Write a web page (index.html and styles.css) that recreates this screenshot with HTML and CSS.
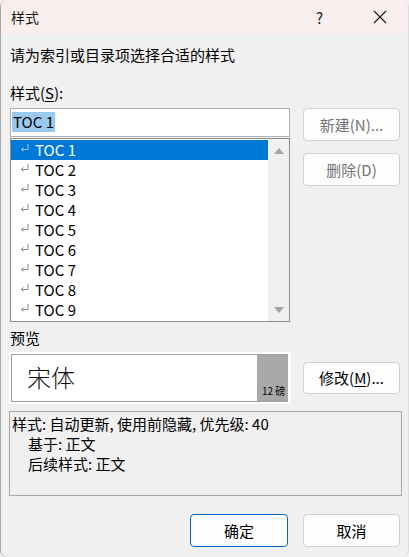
FILE: index.html
```html
<!DOCTYPE html>
<html lang="zh-CN">
<head>
<meta charset="utf-8">
<title>样式</title>
<link rel="stylesheet" href="styles.css">
</head>
<body>
<div class="dialog">
  <div class="titlebar">
    <span class="title">样式</span>
    <span class="help">?</span>
    <svg class="close" width="14" height="14" viewBox="0 0 14 14"><path d="M1 1L13 13M13 1L1 13" stroke="#1a1a1a" stroke-width="1.1" fill="none"/></svg>
  </div>
  <div class="content">
    <div class="intro">请为索引或目录项选择合适的样式</div>
    <div class="label">样式(<u>S</u>):</div>
    <div class="main">
      <div class="left">
        <div class="input"><span class="sel">TOC 1</span></div>
        <div class="list">
          <div class="items">
            <div class="item active"><svg class="ret" width="9" height="8" viewBox="0 0 9 8"><path d="M8 0V5.5H1.5M3.5 3.5L1.5 5.5L3.5 7.5" stroke="currentColor" fill="none" stroke-width="1"/></svg>TOC 1</div>
            <div class="item"><svg class="ret" width="9" height="8" viewBox="0 0 9 8"><path d="M8 0V5.5H1.5M3.5 3.5L1.5 5.5L3.5 7.5" stroke="currentColor" fill="none" stroke-width="1"/></svg>TOC 2</div>
            <div class="item"><svg class="ret" width="9" height="8" viewBox="0 0 9 8"><path d="M8 0V5.5H1.5M3.5 3.5L1.5 5.5L3.5 7.5" stroke="currentColor" fill="none" stroke-width="1"/></svg>TOC 3</div>
            <div class="item"><svg class="ret" width="9" height="8" viewBox="0 0 9 8"><path d="M8 0V5.5H1.5M3.5 3.5L1.5 5.5L3.5 7.5" stroke="currentColor" fill="none" stroke-width="1"/></svg>TOC 4</div>
            <div class="item"><svg class="ret" width="9" height="8" viewBox="0 0 9 8"><path d="M8 0V5.5H1.5M3.5 3.5L1.5 5.5L3.5 7.5" stroke="currentColor" fill="none" stroke-width="1"/></svg>TOC 5</div>
            <div class="item"><svg class="ret" width="9" height="8" viewBox="0 0 9 8"><path d="M8 0V5.5H1.5M3.5 3.5L1.5 5.5L3.5 7.5" stroke="currentColor" fill="none" stroke-width="1"/></svg>TOC 6</div>
            <div class="item"><svg class="ret" width="9" height="8" viewBox="0 0 9 8"><path d="M8 0V5.5H1.5M3.5 3.5L1.5 5.5L3.5 7.5" stroke="currentColor" fill="none" stroke-width="1"/></svg>TOC 7</div>
            <div class="item"><svg class="ret" width="9" height="8" viewBox="0 0 9 8"><path d="M8 0V5.5H1.5M3.5 3.5L1.5 5.5L3.5 7.5" stroke="currentColor" fill="none" stroke-width="1"/></svg>TOC 8</div>
            <div class="item"><svg class="ret" width="9" height="8" viewBox="0 0 9 8"><path d="M8 0V5.5H1.5M3.5 3.5L1.5 5.5L3.5 7.5" stroke="currentColor" fill="none" stroke-width="1"/></svg>TOC 9</div>
          </div>
          <div class="scrollbar">
            <svg width="10" height="6" viewBox="0 0 10 6"><path d="M5 0L10 6H0Z" fill="#a3a3a3"/></svg>
            <svg width="10" height="6" viewBox="0 0 10 6"><path d="M0 0H10L5 6Z" fill="#a3a3a3"/></svg>
          </div>
        </div>
      </div>
      <div class="right">
        <div class="btn disabled">新建(N)...</div>
        <div class="btn disabled second">删除(D)</div>
      </div>
    </div>
    <div class="label preview-label">预览</div>
    <div class="preview-row">
      <div class="preview">
        <div class="preview-inner">
          <div class="sample">宋体</div>
          <div class="size"><span>12 磅</span></div>
        </div>
      </div>
      <div class="btn">修改(<u>M</u>)...</div>
    </div>
    <div class="desc">
      <div>样式: 自动更新, 使用前隐藏, 优先级: 40</div>
      <div class="indent">基于: 正文</div>
      <div class="indent">后续样式: 正文</div>
    </div>
    <div class="footer">
      <div class="btn primary">确定</div>
      <div class="btn">取消</div>
    </div>
  </div>
</div>
</body>
</html>
```
FILE: styles.css
```css
* { box-sizing: border-box; }
html, body {
  margin: 0;
  padding: 0;
}
body {
  width: 409px;
  height: 557px;
  overflow: hidden;
  background: #f0f0f0;
  font-family: "Noto Sans CJK SC", "Noto Sans", sans-serif;
  font-size: 15px;
  color: #000;
}
.dialog {
  width: 409px;
  height: 557px;
  border-left: 1px solid #a9a9a9;
  border-right: 1px solid #dcdcdc;
  border-radius: 7px 7px 7px 7px;
  overflow: hidden;
  background: #f0f0f0;
}
.titlebar {
  height: 34px;
  background: #f9efef;
  display: flex;
  align-items: center;
  padding-left: 10px;
}
.title {
  font-size: 14px;
  line-height: 20px;
  flex: 1;
  color: #1a1a1a;
}
.help {
  font-size: 15px;
  width: 14px;
  margin-right: 43px;
  color: #1a1a1a;
}
.close {
  margin-right: 21px;
}
.content {
  padding: 0 8px 0 9px;
}
.intro {
  margin-top: 11px;
  line-height: 20px;
}
.label {
  margin-top: 18px;
  line-height: 20px;
}
.label u, .btn u {
  text-underline-offset: 2px;
}
.main {
  display: flex;
  margin-top: 5px;
  gap: 13px;
}
.left {
  width: 280px;
}
.input {
  height: 29px;
  background: #fff;
  border: 1px solid #b0b0b0;
  padding: 2px 1px;
}
.sel {
  display: inline-block;
  background: #99c9ef;
  line-height: 20px;
  padding: 0 1px 0 1px;
}
.list {
  margin-top: 1px;
  height: 184px;
  border: 1px solid #8e8e8e;
  background: #fff;
  display: flex;
}
.items {
  flex: 1;
  padding-top: 1px;
}
.item {
  height: 20px;
  line-height: 20px;
  display: flex;
  align-items: center;
  padding-left: 9px;
  color: #000;
}
.item .ret {
  color: #8a8a8a;
  margin-right: 6px;
  margin-top: -4px;
}
.item.active {
  background: #0078d7;
  color: #fff;
}
.item.active .ret {
  color: #9fc6ee;
}
.scrollbar {
  width: 21px;
  background: #f0f0f0;
  display: flex;
  flex-direction: column;
  justify-content: space-between;
  align-items: center;
  padding: 9px 0 8px 0;
}
.right {
  width: 97px;
  display: flex;
  flex-direction: column;
}
.btn {
  width: 97px;
  height: 33px;
  border: 1px solid #d0d0d0;
  border-radius: 4px;
  background: #fdfdfd;
  display: flex;
  align-items: center;
  justify-content: center;
  line-height: 20px;
}
.btn.disabled {
  color: #747474;
}
.btn.second {
  margin-top: 12px;
}
.preview-label {
  margin-top: 6px;
}
.preview-row {
  margin-top: 4px;
  display: flex;
  align-items: center;
  gap: 12px;
  margin-left: -1px;
}
.preview-row .btn {
  height: 32px;
}
.preview {
  width: 282px;
  height: 52px;
  background: #fff;
  padding: 2px 3px 2px 2px;
}
.preview-inner {
  height: 100%;
  border: 1px solid #a0a0a0;
  border-right: none;
  display: flex;
}
.sample {
  flex: 1;
  font-size: 24px;
  line-height: 44px;
  padding-left: 15px;
  font-weight: 300;
  color: #111;
}
.size {
  width: 31px;
  background: #a9a9a9;
  display: flex;
  align-items: flex-end;
  padding: 0 0 4px 5px;
  font-size: 10px;
  line-height: 12px;
  color: #000;
}
.desc {
  margin-top: 7px;
  margin-left: -1px;
  width: 393px;
  height: 85px;
  border: 1px solid #a8a8a8;
  padding: 2px 2px;
  line-height: 20px;
}
.indent {
  padding-left: 16px;
}
.footer {
  margin-top: 18px;
  display: flex;
  justify-content: flex-end;
  gap: 15px;
  padding-right: 0;
  margin-right: 0;
}
.footer .btn {
  width: 98px;
}
.footer .btn:last-child {
  width: 97px;
}
.btn.primary {
  border: 1px solid #0067c0;
  background: #fdfdfd;
}
```
